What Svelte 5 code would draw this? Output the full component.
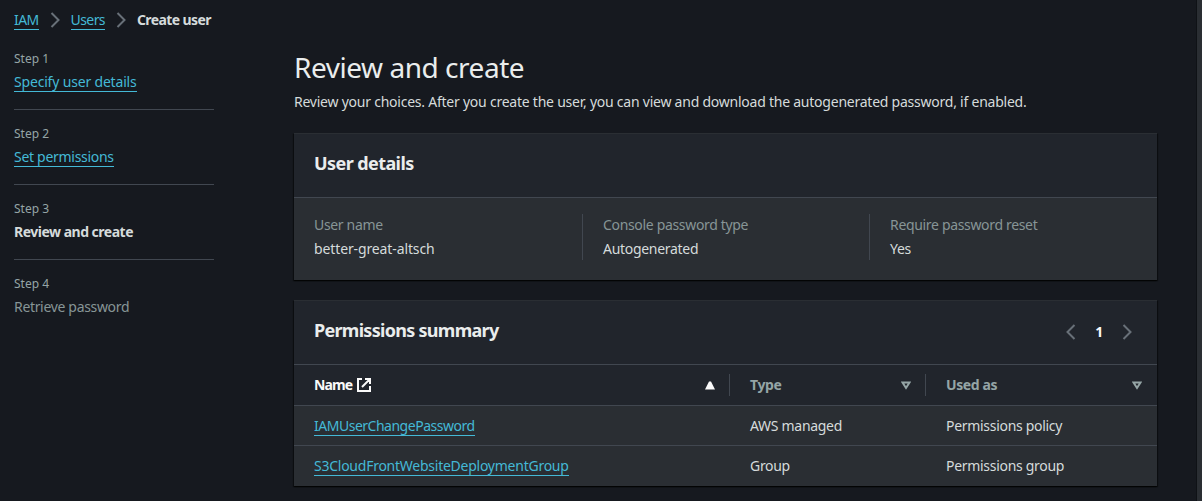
<script>
  const steps = [
    { n: 1, label: 'Specify user details', kind: 'link', track: -0.18 },
    { n: 2, label: 'Set permissions', kind: 'link', track: -0.29 },
    { n: 3, label: 'Review and create', kind: 'current', track: -0.5 },
    { n: 4, label: 'Retrieve password', kind: 'pending', track: -0.33 },
  ];
  const details = [
    { label: 'User name', value: 'better-great-altsch', track: -0.12 },
    { label: 'Console password type', value: 'Autogenerated', track: -0.3 },
    { label: 'Require password reset', value: 'Yes', track: -0.25 },
  ];
  const rows = [
    { name: 'IAMUserChangePassword', type: 'AWS managed', used: 'Permissions policy', track: -0.49 },
    { name: 'S3CloudFrontWebsiteDeploymentGroup', type: 'Group', used: 'Permissions group', track: -0.25 },
  ];
</script>

{#snippet chevron(left)}
  <svg class="chev" class:left width="16" height="16" viewBox="0 0 16 16" aria-hidden="true">
    <path d="M4.5 1 11.5 8 4.5 15" />
  </svg>
{/snippet}

{#snippet caret(up)}
  <svg class="caret" class:up width="10" height="9" viewBox="0 0 10 9" aria-hidden="true">
    {#if up}
      <path d="M0 8.5 4 0.5H6L10 8.5Z" fill="currentColor" />
    {:else}
      <path d="M1.5 1.5H8.5L5 7Z" fill="none" stroke="currentColor" stroke-width="2" />
    {/if}
  </svg>
{/snippet}

<div class="page">
  <div class="content">
    <nav class="crumbs">
      <a class="link" href="#iam">IAM</a>
      {@render chevron(false)}
      <a class="link" href="#users">Users</a>
      {@render chevron(false)}
      <b>Create user</b>
    </nav>
    <div class="columns">
      <aside>
        {#each steps as s}
          <div class="step">
            <div class="num">Step {s.n}</div>
            <div class="name" style="letter-spacing: {s.track}px">
              {#if s.kind === 'link'}
                <a class="link" href="#step">{s.label}</a>
              {:else}
                <span class={s.kind}>{s.label}</span>
              {/if}
            </div>
          </div>
        {/each}
      </aside>
      <main>
        <h1>Review and create</h1>
        <p>Review your choices. After you create the user, you can view and download the autogenerated password, if enabled.</p>
        <section class="card">
          <header><h2>User details</h2></header>
          <div class="details">
            {#each details as d}
              <div class="detail">
                <div class="label">{d.label}</div>
                <div style="letter-spacing: {d.track}px">{d.value}</div>
              </div>
            {/each}
          </div>
        </section>
        <section class="card">
          <header>
            <h2 class="summary">Permissions summary</h2>
            <div class="pager">
              {@render chevron(true)}
              <b>1</b>
              {@render chevron(false)}
            </div>
          </header>
          <div class="row head">
            <div class="cell sorted">
              <span class="nm">Name</span>
              <svg class="ext" width="14" height="14" viewBox="0 0 14 14" aria-hidden="true">
                <path d="M5 1H1V13H13V8M8 1H13V6M13 1 5 9" />
              </svg>
              {@render caret(true)}
            </div>
            <div class="cell">Type {@render caret(false)}</div>
            <div class="cell">Used as {@render caret(false)}</div>
          </div>
          {#each rows as r}
            <div class="row">
              <div class="cell"><a class="link" href="#policy" style="letter-spacing: {r.track}px">{r.name}</a></div>
              <div class="cell">{r.type}</div>
              <div class="cell">{r.used}</div>
            </div>
          {/each}
        </section>
      </main>
    </div>
  </div>
  <div class="rail"></div>
</div>

<style>
  :global(body) {
    background: #16191f;
    overflow: hidden;
  }
  .page {
    box-sizing: border-box;
    height: 501px;
    display: flex;
    background: #16191f;
    color: #d5dbdb;
    font: 14px/22px 'Noto Sans', 'Open Sans', sans-serif;
    letter-spacing: -0.235px;
  }
  .content {
    flex: 1;
    padding: 9px 39px 0 14px;
  }
  .rail {
    width: 5px;
    background: #2a2e33;
    border-left: 1px solid #0f1216;
  }
  .link {
    color: #44b9d6;
    text-decoration: none;
    display: inline-block;
    line-height: 18px;
    border-bottom: 1px solid #44b9d6;
  }
  .crumbs {
    display: flex;
    align-items: center;
    height: 22px;
    gap: 8px;
    letter-spacing: -0.6px;
  }
  .chev {
    display: block;
    fill: none;
    stroke: #687078;
    stroke-width: 2;
  }
  .chev.left {
    transform: scaleX(-1);
  }
  .columns {
    display: flex;
    gap: 80px;
  }
  aside {
    width: 200px;
    padding-top: 17px;
  }
  .step {
    height: 61px;
    border-bottom: 1px solid #414750;
    margin-bottom: 13px;
  }
  .step:last-child {
    border: 0;
  }
  .num {
    font-size: 12px;
    line-height: 22px;
    color: #95a5a6;
    letter-spacing: 0;
  }
  .name {
    line-height: 24px;
  }
  .current {
    font-weight: 700;
  }
  .pending {
    color: #879596;
  }
  main {
    flex: 1;
    padding-top: 18px;
  }
  h1 {
    margin: 0;
    font-size: 28px;
    line-height: 36px;
    font-weight: 400;
    color: #eaeded;
    letter-spacing: -0.46px;
  }
  p {
    margin: 6px 0 20px;
    white-space: nowrap;
  }
  .card {
    background: #2a2e33;
    margin-bottom: 20px;
    box-shadow: 0 1px 1px #0008, 1px 1px 1px #0006, -1px 1px 1px #0006;
  }
  header {
    box-sizing: border-box;
    height: 65px;
    padding: 0 22px 2px 20px;
    display: flex;
    align-items: center;
    justify-content: space-between;
    background: #21252c;
    border-top: 1px solid #2a2e33;
    border-bottom: 1px solid #414750;
  }
  h2 {
    margin: 0 0 3px;
    font-size: 18px;
    line-height: 22px;
    font-weight: 700;
    color: #eaeded;
    letter-spacing: -0.58px;
  }
  .summary {
    letter-spacing: -0.71px;
  }
  .pager {
    display: flex;
    align-items: center;
    gap: 16px;
    color: #fafafa;
  }
  .details {
    display: grid;
    grid-template-columns: 288px 287px 288px;
    padding: 16px 0 20px;
  }
  .detail {
    box-sizing: border-box;
    height: 46px;
    padding-left: 20px;
    border-left: 1px solid #414750;
    line-height: 24px;
  }
  .detail > div {
    margin-top: -1px;
    margin-bottom: 1px;
  }
  .detail:first-child {
    border-left: 0;
  }
  .label {
    color: #879596;
    letter-spacing: -0.33px;
  }
  .row {
    box-sizing: border-box;
    height: 40px;
    display: grid;
    grid-template-columns: 435px 196px 232px;
    align-items: center;
    border-bottom: 1px solid #414750;
  }
  .row:last-child {
    border-bottom: 0;
  }
  .cell {
    padding: 0 20px;
    letter-spacing: -0.3px;
  }
  .cell + .cell {
    padding-left: 21px;
  }
  .head {
    height: 41px;
    background: #21252c;
    color: #95a5a6;
    font-weight: 700;
  }
  .head .cell,
  .head .cell + .cell {
    display: flex;
    align-items: center;
    height: 22px;
    padding: 0 14px 0 20px;
    border-left: 1px solid #414750;
    letter-spacing: -0.4px;
  }
  .head .cell:last-child {
    padding-right: 15px;
  }
  .head .sorted {
    color: #fafafa;
    border-left: 0;
  }
  .sorted .nm {
    letter-spacing: -0.9px;
    margin-top: -1px;
  }
  .caret {
    margin-left: auto;
  }
  .ext {
    margin-left: 5px;
    fill: none;
    stroke: currentColor;
    stroke-width: 2;
  }
</style>
